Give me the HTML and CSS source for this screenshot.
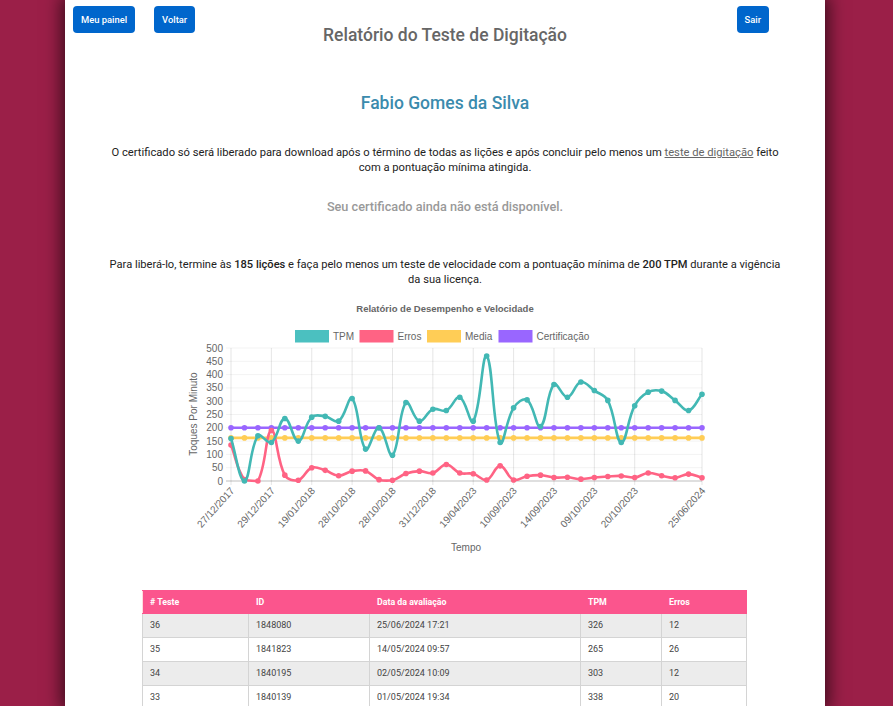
FILE: index.html
```html
<!DOCTYPE html>
<html lang="pt-BR">
<head>
    <meta charset="UTF-8">
    <meta name="viewport" content="width=device-width, initial-scale=1.0">
    <title>Relatório do Teste de Digitação</title>
    <link rel="stylesheet" href="styles.css">
</head>
<body>
<main class="page">
    <header class="top">
        <nav class="top-nav">
            <a class="btn" href="#">Meu painel</a>
            <a class="btn" href="#">Voltar</a>
            <a class="btn btn-exit" href="#">Sair</a>
        </nav>
        <h1>Relatório do Teste de Digitação</h1>
    </header>

    <h2 class="student">Fabio Gomes da Silva</h2>

    <p class="info">O certificado só será liberado para download após o término de todas as lições e após concluir pelo menos um <a href="#">teste de digitação</a> feito com a pontuação mínima atingida.</p>

    <h3 class="unavailable">Seu certificado ainda não está disponível.</h3>

    <p class="info info-unlock">Para liberá-lo, termine às <strong>185 lições</strong> e faça pelo menos um teste de velocidade com a pontuação mínima de <strong>200 TPM</strong> durante a vigência da sua licença.</p>

    <div class="chart">
        <svg id="chart" width="540" height="270" viewBox="180 295 540 270"></svg>
    </div>

    <table class="results">
        <colgroup>
            <col class="col-num">
            <col class="col-id">
            <col class="col-date">
            <col class="col-tpm">
            <col class="col-err">
        </colgroup>
        <thead>
            <tr>
                <th># Teste</th>
                <th>ID</th>
                <th>Data da avaliação</th>
                <th>TPM</th>
                <th>Erros</th>
            </tr>
        </thead>
        <tbody>
            <tr><td>36</td><td>1848080</td><td>25/06/2024 17:21</td><td>326</td><td>12</td></tr>
            <tr><td>35</td><td>1841823</td><td>14/05/2024 09:57</td><td>265</td><td>26</td></tr>
            <tr><td>34</td><td>1840195</td><td>02/05/2024 10:09</td><td>303</td><td>12</td></tr>
            <tr><td>33</td><td>1840139</td><td>01/05/2024 19:34</td><td>338</td><td>20</td></tr>
        </tbody>
    </table>
</main>
<script src="chart.js"></script>
</body>
</html>
```

FILE: styles.css
```css
html, body {
    margin: 0;
    padding: 0;
    height: 100%;
    overflow: hidden;
}

body {
    background-color: #9b1f48;
    font-family: Roboto, Arial, sans-serif;
    color: #222;
}

.page {
    width: 760px;
    height: 100%;
    margin-left: 65px;
    background-color: #fff;
    box-shadow: 0 0 16px 4px rgba(0, 0, 0, 0.6);
    overflow: hidden;
}

.top {
    display: grid;
}

.top-nav, .top h1 {
    grid-area: 1 / 1;
}

.top-nav {
    display: flex;
    align-items: flex-start;
    gap: 19px;
    padding: 6px 56px 0 8px;
}

.btn {
    display: block;
    height: 27px;
    line-height: 27px;
    padding: 0 8px;
    background-color: #0066cc;
    border-radius: 4px;
    color: #fff;
    font-size: 9.4px;
    font-weight: 500;
    text-decoration: none;
}

.btn-exit {
    margin-left: auto;
}

.top h1 {
    margin: 0;
    padding-top: 24px;
    text-align: center;
    font-size: 17.5px;
    line-height: 22px;
    font-weight: 500;
    color: #666;
}

.student {
    margin: 46px 0 0;
    text-align: center;
    font-size: 17.5px;
    line-height: 22px;
    font-weight: 500;
    color: #3b8bad;
}

.info {
    margin: 31px 40px 0;
    text-align: center;
    font-size: 11.2px;
    line-height: 15px;
}

.info a {
    color: #666;
}

.info strong {
    font-weight: 500;
}

.info-unlock {
    margin-top: 42px;
    font-size: 11.12px;
}

.unavailable {
    margin: 24px 0 0;
    text-align: center;
    font-size: 12.7px;
    line-height: 16px;
    font-weight: 500;
    color: #999;
}

.chart {
    display: flex;
    margin: 8px 0 0 115px;
}

.chart svg {
    display: block;
}

.chart text {
    font-family: "Liberation Sans", Arial, sans-serif;
    font-size: 10px;
    fill: #666;
}

.chart .chart-title {
    font-size: 9.5px;
    font-weight: bold;
}

.results {
    width: 604px;
    margin: 25px 0 0 77px;
    border-collapse: collapse;
    table-layout: fixed;
    font-size: 9px;
}

.col-num { width: 106px; }
.col-id { width: 121px; }
.col-date { width: 211px; }
.col-tpm { width: 81px; }
.col-err { width: 85px; }

.results th {
    height: 22px;
    padding: 0 0 0 7px;
    background-color: #fb558d;
    border: 1px solid #fb558d;
    border-left-color: #fdd;
    color: #fff;
    text-align: left;
    font-size: 8.8px;
    font-weight: 700;
}

.results td {
    height: 21px;
    padding: 0 0 2px 7px;
    border: 1px solid #d4d4d4;
    color: #444;
}

.results tbody tr:nth-child(odd) td {
    background-color: #ececec;
}
```

FILE: chart.js
```js
var NS = 'http://www.w3.org/2000/svg';
var svg = document.getElementById('chart');

var left = 231, right = 702, top0 = 348, bottom = 481;
var tpm = [160, 0, 170, 145, 235, 150, 240, 243, 225, 310, 120, 200, 97, 295, 225, 270, 265, 315, 225, 470, 145, 275, 305, 205, 363, 315, 372, 340, 303, 145, 283, 334, 338, 303, 265, 326];
var erros = [135, 5, 0, 190, 22, 3, 50, 40, 20, 37, 38, 5, 3, 28, 37, 30, 62, 30, 27, 4, 57, 4, 18, 22, 13, 14, 7, 13, 17, 19, 13, 30, 20, 12, 26, 12];
var labels = {
    0: '27/12/2017', 3: '29/12/2017', 6: '19/01/2018', 9: '28/10/2018', 12: '28/10/2018',
    15: '31/12/2018', 18: '19/04/2023', 21: '10/09/2023', 24: '14/09/2023', 27: '09/10/2023',
    30: '20/10/2023', 35: '25/06/2024'
};

function el(name, attrs, text) {
    var node = document.createElementNS(NS, name);
    for (var k in attrs) node.setAttribute(k, attrs[k]);
    if (text) node.textContent = text;
    svg.appendChild(node);
    return node;
}

function px(i) { return left + (right - left) * i / 35; }
function py(v) { return bottom - (bottom - top0) * v / 500; }

// linhas de grade
for (var v = 0; v <= 500; v += 50) {
    el('line', { x1: left - 5, x2: right, y1: py(v), y2: py(v), stroke: v === 0 ? 'rgba(0,0,0,0.25)' : 'rgba(0,0,0,0.05)' });
    el('text', { x: left - 8, y: py(v) + 3.5, 'text-anchor': 'end' }, String(v));
}
Object.keys(labels).forEach(function(i) {
    var x = px(+i) + 4;
    el('line', { x1: x - 4, x2: x - 4, y1: top0, y2: bottom + 4, stroke: 'rgba(0,0,0,0.1)' });
    el('text', { x: x, y: bottom + 10, 'text-anchor': 'end', transform: 'rotate(-48 ' + x + ' ' + (bottom + 10) + ')' }, labels[i]);
});

// curva com tensão 0.4, igual ao Chart.js
function curve(values) {
    var pts = values.map(function(v, i) { return [px(i), py(v)]; });
    var d = 'M' + pts[0][0] + ' ' + pts[0][1];
    function ctrl(p0, p1, p2) {
        var d01 = Math.hypot(p1[0] - p0[0], p1[1] - p0[1]);
        var d12 = Math.hypot(p2[0] - p1[0], p2[1] - p1[1]);
        var s = d01 + d12 || 1;
        var fa = 0.4 * d01 / s, fb = 0.4 * d12 / s;
        return {
            prev: [p1[0] - fa * (p2[0] - p0[0]), p1[1] - fa * (p2[1] - p0[1])],
            next: [p1[0] + fb * (p2[0] - p0[0]), p1[1] + fb * (p2[1] - p0[1])]
        };
    }
    var c = pts.map(function(p, i) {
        return ctrl(pts[Math.max(i - 1, 0)], p, pts[Math.min(i + 1, pts.length - 1)]);
    });
    for (var i = 1; i < pts.length; i++) {
        var a = c[i - 1].next, b = c[i].prev;
        // o Chart.js limita os pontos de controle à área do gráfico
        d += 'C' + a[0] + ' ' + Math.min(a[1], bottom) + ' ' + b[0] + ' ' + Math.min(b[1], bottom) + ' ' + pts[i][0] + ' ' + pts[i][1];
    }
    return d;
}

function fill(n, v) {
    var out = [];
    for (var i = 0; i < n; i++) out.push(v);
    return out;
}

function series(values, color) {
    el('path', { d: curve(values), fill: 'none', stroke: color, 'stroke-width': 2.6 });
    values.forEach(function(v, i) {
        el('circle', { cx: px(i), cy: py(v), r: 2.8, fill: color });
    });
}

series(fill(36, 200), '#9966ff');
series(fill(36, 162), '#ffcd56');
series(erros, '#ff6384');
series(tpm, '#42b8b4');

// títulos e legenda
el('text', { x: 445, y: 312, 'text-anchor': 'middle', 'class': 'chart-title' }, 'Relatório de Desempenho e Velocidade');
el('text', { x: 466, y: 551, 'text-anchor': 'middle' }, 'Tempo');
el('text', { x: 197, y: 414, 'text-anchor': 'middle', transform: 'rotate(-90 197 414)' }, 'Toques Por Minuto');

[
    ['TPM', 295, 333, '#4bc0c0'],
    ['Erros', 359.5, 397.5, '#ff6384'],
    ['Media', 427, 465, '#ffcd56'],
    ['Certificação', 498.5, 536.5, '#9966ff']
].forEach(function(item) {
    el('rect', { x: item[1], y: 330, width: 34, height: 12.5, fill: item[3] });
    el('text', { x: item[2], y: 339.5 }, item[0]);
});
```
